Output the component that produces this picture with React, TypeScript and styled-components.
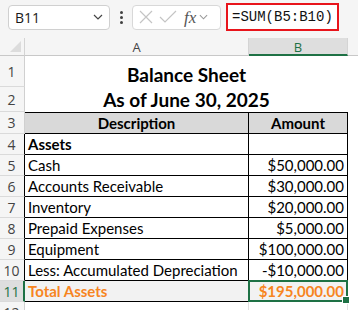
import React from "react";
import styled, { createGlobalStyle } from "styled-components";

const Global = createGlobalStyle`
  html, body { margin: 0; padding: 0; background: #f5f5f5; }
  * { box-sizing: border-box; }
`;

const Page = styled.div`
  width: 358px;
  height: 310px;
  overflow: hidden;
  background: #f5f5f5;
  font-family: "Open Sans", "Noto Sans", sans-serif;
`;

const Toolbar = styled.div`
  height: 38px;
  display: flex;
  align-items: center;
  padding: 0 0 0 8px;
  gap: 0;
`;

const NameBox = styled.div`
  width: 102px;
  height: 25px;
  margin-top: -4px;
  background: #fff;
  border: 1px solid #d0d0d0;
  border-radius: 4px;
  display: flex;
  align-items: center;
  justify-content: space-between;
  padding: 0 6px 0 6px;
  font-size: 14px;
  color: #1a1a1a;
`;

const Dots = styled.div`
  width: 20px;
  margin: -4px 0 0 1px;
  display: flex;
  flex-direction: column;
  align-items: center;
  gap: 2px;
  span {
    width: 3px;
    height: 3px;
    border-radius: 50%;
    background: #404040;
  }
`;

const FxGroup = styled.div`
  width: 89px;
  height: 25px;
  margin: -4px 0 0 1px;
  background: #fff;
  border: 1px solid #d8d8d8;
  border-radius: 4px;
  display: flex;
  align-items: center;
  padding: 0 0 0 4px;
  gap: 3px;
`;

const FxText = styled.span`
  font-family: "Liberation Serif", serif;
  font-style: italic;
  font-size: 17px;
  color: #555;
  margin-left: 3px;
  line-height: 1;
`;

const FormulaBox = styled.div`
  width: 113px;
  height: 28px;
  margin: -4px 0 0 5px;
  background: #fff;
  border: 2px solid #e8141b;
  display: flex;
  align-items: center;
  padding-left: 4px;
  font-family: "Liberation Mono", monospace;
  font-size: 14px;
  color: #111;
`;

const Sheet = styled.div`
  display: grid;
  grid-template-columns: 25px 224px 99px 10px;
  grid-template-rows: 18px 31px 25px 22px repeat(8, 21px) 21px;
`;

const Corner = styled.div`
  background: #f5f5f5;
  border-right: 1px solid #d4d4d4;
  border-bottom: 1px solid #c8c8c8;
  position: relative;
  &::after {
    content: "";
    position: absolute;
    right: 3px;
    bottom: 3px;
    width: 0;
    height: 0;
    border-left: 11px solid transparent;
    border-bottom: 11px solid #dcdcdc;
  }
`;

const ColHead = styled.div<{ $sel?: boolean }>`
  background: ${(p) => (p.$sel ? "#dedede" : "#f5f5f5")};
  border-right: 1px solid #d4d4d4;
  border-bottom: ${(p) => (p.$sel ? "2px solid #1e7145" : "1px solid #c8c8c8")};
  color: ${(p) => (p.$sel ? "#1e7145" : "#444")};
  font-size: 13px;
  display: flex;
  align-items: center;
  justify-content: center;
  padding-top: ${(p) => (p.$sel ? "1px" : "0")};
`;

const Filler = styled.div`
  background: #f5f5f5;
  border-bottom: 1px solid #c8c8c8;
`;

const RowHead = styled.div<{ $sel?: boolean; $edge?: boolean }>`
  background: ${(p) => (p.$sel ? "#dedede" : "#f5f5f5")};
  border-bottom: 1px solid #dadada;
  border-right: ${(p) =>
    p.$sel ? "2px solid #1e7145" : p.$edge ? "1px solid #000" : "1px solid #d0d0d0"};
  color: ${(p) => (p.$sel ? "#1e7145" : "#444")};
  font-size: 14px;
  display: flex;
  align-items: center;
  justify-content: center;
  padding-right: ${(p) => (p.$sel ? "0" : "1px")};
`;

const Title = styled.div`
  grid-column: 2 / span 2;
  background: #fff;
  font-family: Lato, "Liberation Sans", sans-serif;
  font-weight: 700;
  font-size: 19px;
  color: #000;
  display: flex;
  align-items: flex-end;
  justify-content: center;
  padding-bottom: 1px;
`;

const Cell = styled.div<{
  $right?: boolean;
  $bold?: boolean;
  $head?: boolean;
  $total?: boolean;
  $center?: boolean;
}>`
  background: ${(p) => (p.$head ? "#d9d9d9" : p.$total ? "#f2f2f2" : "#fff")};
  border-right: 1px solid #000;
  border-bottom: 1px solid #000;
  font-family: Lato, "Liberation Sans", sans-serif;
  font-size: 15px;
  font-weight: ${(p) => (p.$bold || p.$head || p.$total ? 700 : 400)};
  color: ${(p) => (p.$total ? "#f7851f" : "#000")};
  display: flex;
  align-items: flex-end;
  justify-content: ${(p) => (p.$center ? "center" : p.$right ? "flex-end" : "flex-start")};
  padding: 0 3px 1px 3px;
  white-space: nowrap;
  overflow: visible;
`;

const HeadCell = styled(Cell)`
  border-top: 1px solid #000;
`;

const Selected = styled(Cell)`
  position: relative;
  border: 2px solid #1e7145;
  margin: -1px 0 0 -1px;
  padding: 0 2px 0 3px;
  &::after {
    content: "";
    position: absolute;
    right: -4px;
    bottom: -4px;
    width: 6px;
    height: 6px;
    background: #1e7145;
    border: 1px solid #fff;
  }
`;

const Blank = styled.div`
  background: #fff;
  border-right: 1px solid #e1e1e1;
  border-bottom: 1px solid #e1e1e1;
`;

const Side = styled.div`
  background: #fff;
`;

const XIcon = () => (
  <svg width="18" height="18" viewBox="0 0 18 18" fill="none" stroke="#c4c4c4" strokeWidth="1.2">
    <path d="M3 3 L15 15 M15 3 L3 15" />
  </svg>
);
const CheckIcon = () => (
  <svg width="20" height="18" viewBox="0 0 20 18" fill="none" stroke="#c4c4c4" strokeWidth="1.2">
    <path d="M2 9 L7 14 L18 3" />
  </svg>
);
const Chevron = ({ color = "#444", w = 10 }: { color?: string; w?: number }) => (
  <svg width={w} height="6" viewBox="0 0 10 6" fill="none" stroke={color} strokeWidth="1.2">
    <path d="M1 1 L5 5 L9 1" />
  </svg>
);

const rows: [string, string][] = [
  ["Cash", "$50,000.00"],
  ["Accounts Receivable", "$30,000.00"],
  ["Inventory", "$20,000.00"],
  ["Prepaid Expenses", "$5,000.00"],
  ["Equipment", "$100,000.00"],
  ["Less: Accumulated Depreciation", "-$10,000.00"],
];

export default function App() {
  return (
    <Page>
      <Global />
      <Toolbar>
        <NameBox>
          <span>B11</span>
          <Chevron />
        </NameBox>
        <Dots>
          <span />
          <span />
          <span />
        </Dots>
        <FxGroup>
          <XIcon />
          <CheckIcon />
          <FxText>fx</FxText>
          <Chevron color="#999" w={9} />
        </FxGroup>
        <FormulaBox>=SUM(B5:B10)</FormulaBox>
      </Toolbar>
      <Sheet>
        <Corner />
        <ColHead>A</ColHead>
        <ColHead $sel>B</ColHead>
        <Filler />

        <RowHead>1</RowHead>
        <Title>Balance Sheet</Title>
        <Side />

        <RowHead>2</RowHead>
        <Title>As of June 30, 2025</Title>
        <Side />

        <RowHead>3</RowHead>
        <HeadCell $head $center>Description</HeadCell>
        <HeadCell $head $center>Amount</HeadCell>
        <Side />

        <RowHead $edge>4</RowHead>
        <Cell $bold>Assets</Cell>
        <Cell />
        <Side />

        {rows.map(([label, amount], i) => (
          <React.Fragment key={label}>
            <RowHead $edge>{i + 5}</RowHead>
            <Cell>{label}</Cell>
            <Cell $right>{amount}</Cell>
            <Side />
          </React.Fragment>
        ))}

        <RowHead $sel>11</RowHead>
        <Cell $total>Total Assets</Cell>
        <Selected $total $right>$195,000.00</Selected>
        <Side />

        <RowHead>12</RowHead>
        <Blank />
        <Blank />
        <Side />
      </Sheet>
    </Page>
  );
}
